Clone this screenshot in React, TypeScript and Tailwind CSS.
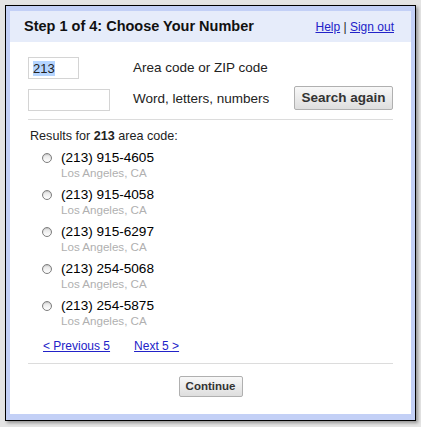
const numbers = [
  "(213) 915-4605",
  "(213) 915-4058",
  "(213) 915-6297",
  "(213) 254-5068",
  "(213) 254-5875",
];

function Radio() {
  return (
    <span className="mr-[9px] mt-[3px] block h-[10px] w-[10px] shrink-0 rounded-full border border-[#7e7e7e] bg-gradient-to-b from-[#e2e2e2] to-[#ffffff] shadow-[inset_0_1px_1px_rgba(0,0,0,0.15)]" />
  );
}

export default function App() {
  return (
    <div className="h-[427px] w-[421px] bg-[#e4e4e4] pl-[5px] pt-[5px] font-['Liberation_Sans',Arial,sans-serif] text-[#222]">
      <div className="flex h-[416px] w-[411px] flex-col border border-black bg-[#c3d0f6] px-[4px] pb-[6px] pt-[5px] shadow-[2px_2px_3px_rgba(0,0,0,0.35)]">
        <div className="flex flex-1 flex-col bg-white">
          {/* header */}
          <div className="flex h-[31px] items-center justify-between bg-[#e6ecfa] pl-[14px] pr-[17px]">
            <h1 className="text-[14.5px] font-bold text-[#111]">Step 1 of 4: Choose Your Number</h1>
            <div className="text-[12px] text-[#222]">
              <a href="#" className="text-[#2222c8] underline">Help</a>
              {" | "}
              <a href="#" className="text-[#2222c8] underline">Sign out</a>
            </div>
          </div>

          <div className="flex flex-col px-[18px] pt-[15px]">
            {/* search form */}
            <div className="flex h-[22px] items-center">
              <div className="w-[105px]">
                <div className="flex h-[22px] w-[51px] items-center border border-[#d4d4d4] pl-[4px] text-[13px]">
                  <span className="bg-[#b5d5ff] leading-[15px]">213</span>
                </div>
              </div>
              <span className="text-[13.5px]">Area code or ZIP code</span>
            </div>
            <div className="mt-[7px] flex h-[24px] items-center">
              <div className="w-[105px]">
                <div className="mt-[3px] h-[22px] w-[82px] border border-[#d4d4d4]" />
              </div>
              <span className="mt-[2px] text-[13.5px]">Word, letters, numbers</span>
              <button className="ml-auto h-[24px] w-[99px] rounded-[2px] border border-[#b0b0b0] bg-gradient-to-b from-[#f8f8f8] to-[#dedede] text-[13.5px] font-bold text-[#333]">
                Search again
              </button>
            </div>

            <div className="mt-[9px] h-px bg-[#dcdcdc]" />

            {/* results */}
            <p className="mt-[8px] ml-[2px] text-[12.6px] leading-[16px]">
              Results for <b>213</b> area code:
            </p>
            <ul className="mt-[6px] pl-[14px]">
              {numbers.map((n) => (
                <li key={n} className="flex pb-[7px]">
                  <Radio />
                  <div>
                    <div className="text-[13.6px] leading-[16px] text-black">{n}</div>
                    <div className="text-[11.6px] leading-[14px] text-[#b0b0b0]">Los Angeles, CA</div>
                  </div>
                </li>
              ))}
            </ul>
            <div className="mt-[4px] flex pl-[15px] text-[12px] leading-[15px]">
              <a href="#" className="text-[#2222c8] underline">&lt; Previous 5</a>
              <a href="#" className="ml-[24px] text-[#2222c8] underline">Next 5 &gt;</a>
            </div>

            <div className="mt-[9px] h-px bg-[#dcdcdc]" />

            <div className="mt-[12px] flex justify-center">
              <button className="h-[21px] w-[64px] rounded-[2px] border border-[#b0b0b0] bg-gradient-to-b from-[#f8f8f8] to-[#dedede] text-[11.5px] font-bold text-[#333]">
                Continue
              </button>
            </div>
          </div>
        </div>
      </div>
    </div>
  );
}
